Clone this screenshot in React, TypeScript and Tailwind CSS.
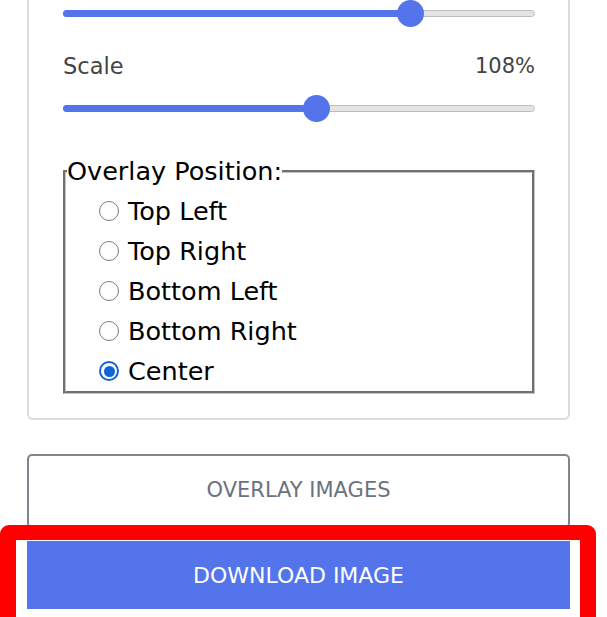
import React, { useState } from "react";

const positions = ["Top Left", "Top Right", "Bottom Left", "Bottom Right", "Center"];

const Slider = ({ thumbLeft }: { thumbLeft: number }) => {
  return (
    <div className="relative h-[27px] w-full">
      <div className="absolute left-0 right-0 top-[10px] h-[7px] rounded-full border border-[#bdbdbd] bg-[#e4e4e4]"></div>
      <div
        className="absolute left-0 top-[10px] h-[7px] rounded-full bg-[#5474eb]"
        style={{ width: thumbLeft + 13 }}
      ></div>
      <div
        className="absolute top-0 h-[27px] w-[27px] rounded-full bg-[#5474eb]"
        style={{ left: thumbLeft }}
      ></div>
    </div>
  );
};

export default function App() {
  const [position, setPosition] = useState("Center");

  return (
    <div className="relative h-[617px] w-[607px] overflow-hidden bg-white font-['DejaVu_Sans',sans-serif]">
      <div className="ml-[27px] w-[543px] rounded-b-md border-2 border-t-0 border-[#dcdcdc] pb-[24px] pl-[34px] pr-[33px]">
        <Slider thumbLeft={334} />
        <div className="mt-[25px] flex h-[30px] items-center justify-between text-[22.5px] text-[#444]">
          <span>Scale</span>
          <span className="text-[21px]">108%</span>
        </div>
        <div className="mt-[13px]">
          <Slider thumbLeft={240} />
        </div>
        <fieldset className="mt-[34px] border-[3px] border-[#c4c4c4] pb-0 pl-[33px] pt-[5px] [border-style:groove]">
          <legend className="-ml-[32px] text-[25.5px] leading-[30px] text-black">Overlay Position:</legend>
          {positions.map((p) => (
            <label
              key={p}
              className="flex h-[40px] cursor-pointer items-center gap-[9px] text-[25.5px] text-black"
              onClick={() => setPosition(p)}
            >
              {position === p ? (
                <span className="flex h-[20px] w-[20px] items-center justify-center rounded-full border-2 border-[#0f63d6]">
                  <span className="h-[11px] w-[11px] rounded-full bg-[#0f63d6]"></span>
                </span>
              ) : (
                <span className="h-[20px] w-[20px] rounded-full border-[1.5px] border-[#7a7a7a]"></span>
              )}
              <span>{p}</span>
            </label>
          ))}
        </fieldset>
      </div>

      <button className="ml-[27px] mt-[34px] flex h-[74px] w-[543px] items-center justify-center rounded-[5px] border-2 border-[#7f858d] text-[21px] text-[#6b7280]">
        OVERLAY IMAGES
      </button>
      <button className="ml-[27px] mt-[13px] flex h-[68px] w-[543px] items-center justify-center bg-[#5474eb] text-[22px] text-white">
        DOWNLOAD IMAGE
      </button>

      <div className="pointer-events-none absolute left-0 top-[525px] h-[110px] w-[596px] rounded-[9px] border-[16px] border-t-[15px] border-[#ff0000]"></div>
    </div>
  );
}
